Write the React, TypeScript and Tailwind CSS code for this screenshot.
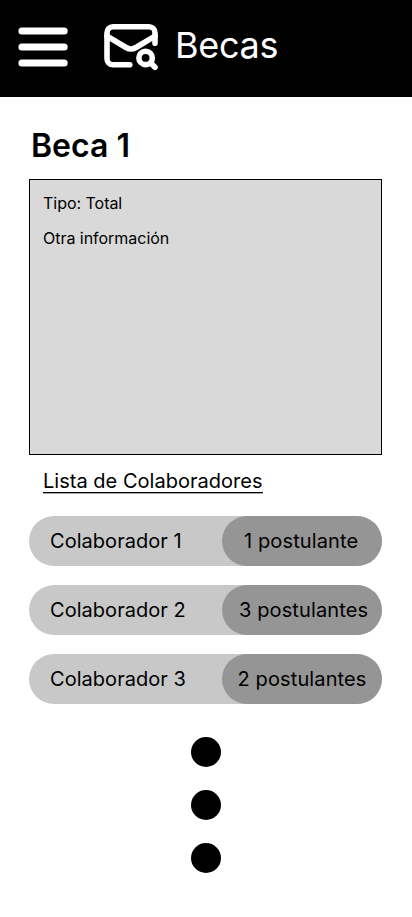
const rows = [
  { name: "Colaborador 1", count: "1 postulante", pad: "pl-[22px]" },
  { name: "Colaborador 2", count: "3 postulantes", pad: "pl-[17px]" },
  { name: "Colaborador 3", count: "2 postulantes", pad: "pl-[15.500px]" },
];

export default function App() {
  return (
    <div className="h-[917px] w-[412px] overflow-hidden bg-white font-['Inter',sans-serif] text-black">
      <header className="flex h-[97px] bg-black text-white">
        <svg className="ml-[18px] mt-[27px] h-10 w-[50px] shrink-0" viewBox="0 0 50 40" fill="none" stroke="currentColor" strokeWidth="7" strokeLinecap="round">
          <path d="M3.900 4h42.300M3.900 20h42.300M3.900 36h42.300" />
        </svg>
        <svg className="ml-9 mt-[23px] h-12 w-[56px] shrink-0" viewBox="0 0 56 48" fill="none" stroke="currentColor" strokeWidth="5.600" strokeLinecap="round" strokeLinejoin="round">
          <path d="M25.800 41.700H9a6 6 0 0 1-6-6v-26a6 6 0 0 1 6-6h36a6 6 0 0 1 6 6v10.600" />
          <path d="m3 13.200 19 11.300q5 3 10 0L51 13.200" />
          <circle cx="41.600" cy="34.900" r="6.700" />
          <path d="m46.500 39.800 4.500 4.500" />
        </svg>
        <h1 className="ml-[15px] mt-[23px] text-[36px] leading-[45px] tracking-[-0.3px]">Becas</h1>
      </header>
      <main className="px-[29px] pt-[29px]">
        <h2 className="ml-[2px] text-[32px] font-semibold leading-[40px]">Beca 1</h2>
        <section className="mt-[13px] h-[276px] w-[353px] border border-black bg-[#d9d9d9] pl-[13px] pt-[13px] text-[16px] leading-[20px] tracking-[-0.03px]">
          <p>Tipo: Total</p>
          <p className="mt-[15px]">Otra información</p>
        </section>
        <h3 className="ml-[14px] mt-[14px] h-6 w-fit border-b border-black text-[20px] leading-[24px] tracking-[0.02px] shadow-[0_1px_0_#aaa]">Lista de Colaboradores</h3>
        <ul className="mt-[23px] flex flex-col gap-[19px] text-[20px] leading-[50px]">
          {rows.map((row) => (
            <li key={row.name} className="flex h-[50px] w-[353px] rounded-full bg-[#c8c8c8]">
              <span className="w-[193px] pl-[21px] tracking-[0.04px]">{row.name}</span>
              <span className={"w-40 whitespace-nowrap rounded-full bg-[#959595] tracking-[0.12px] " + row.pad}>{row.count}</span>
            </li>
          ))}
        </ul>
        <div className="mt-[33px] flex flex-col items-center gap-[23px]">
          <i className="size-[30px] rounded-full bg-black" />
          <i className="size-[30px] rounded-full bg-black" />
          <i className="size-[30px] rounded-full bg-black" />
        </div>
      </main>
    </div>
  );
}
